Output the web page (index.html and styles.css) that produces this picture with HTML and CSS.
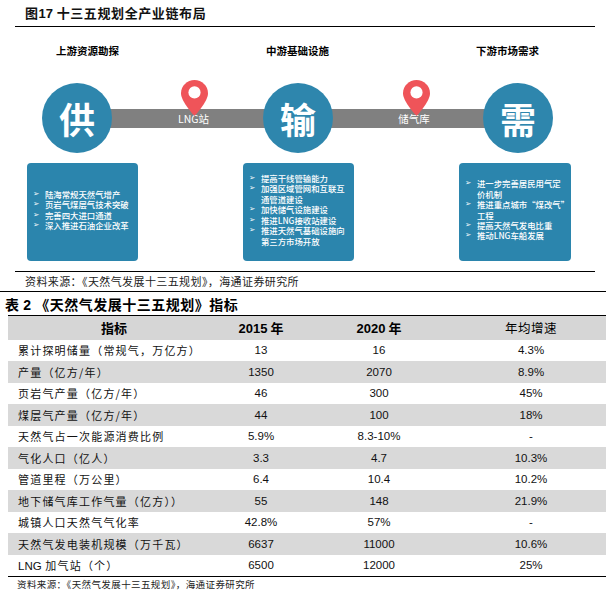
FILE: index.html
```html
<!DOCTYPE html>
<html lang="zh-CN">
<head>
<meta charset="utf-8">
<title>十三五规划全产业链布局</title>
<link rel="stylesheet" href="styles.css">
</head>
<body>
<div class="page">
  <div class="fig-title">图<b class="num">17</b> 十三五规划全产业链布局</div>

  <div class="diagram">
    <div class="stage-titles">
      <div>上游资源勘探</div>
      <div>中游基础设施</div>
      <div>下游市场需求</div>
    </div>

    <div class="chain">
      <div class="node">供</div>
      <div class="link link-a">
        <div class="bar"><span class="link-label">LNG站</span></div>
        <svg class="pin" viewBox="0 0 24 32"><path d="M12 0C5.4 0 0 5.3 0 11.8 0 19.5 12 32 12 32S24 19.5 24 11.8C24 5.3 18.6 0 12 0Z" fill="#ef5459"/><circle cx="12" cy="11" r="5.4" fill="#fff"/></svg>
      </div>
      <div class="node">输</div>
      <div class="link link-b">
        <div class="bar"><span class="link-label">储气库</span></div>
        <svg class="pin" viewBox="0 0 24 32"><path d="M12 0C5.4 0 0 5.3 0 11.8 0 19.5 12 32 12 32S24 19.5 24 11.8C24 5.3 18.6 0 12 0Z" fill="#ef5459"/><circle cx="12" cy="11" r="5.4" fill="#fff"/></svg>
      </div>
      <div class="node">需</div>
    </div>

    <div class="boxes">
      <ul class="box">
        <li><span class="arw">➢</span><span>陆海常规天然气增产</span></li>
        <li><span class="arw">➢</span><span>页岩气煤层气技术突破</span></li>
        <li><span class="arw">➢</span><span>完善四大进口通道</span></li>
        <li><span class="arw">➢</span><span>深入推进石油企业改革</span></li>
      </ul>
      <ul class="box">
        <li><span class="arw">➢</span><span>提高干线管输能力</span></li>
        <li><span class="arw">➢</span><span>加强区域管网和互联互<br>通管道建设</span></li>
        <li><span class="arw">➢</span><span>加快储气设施建设</span></li>
        <li><span class="arw">➢</span><span>推进LNG接收站建设</span></li>
        <li><span class="arw">➢</span><span>推进天然气基础设施向<br>第三方市场开放</span></li>
      </ul>
      <ul class="box">
        <li><span class="arw">➢</span><span>进一步完善居民用气定<br>价机制</span></li>
        <li><span class="arw">➢</span><span>推进重点城市“煤改气”<br>工程</span></li>
        <li><span class="arw">➢</span><span>提高天然气发电比重</span></li>
        <li><span class="arw">➢</span><span>推动LNG车船发展</span></li>
      </ul>
    </div>
  </div>

  <div class="source source-fig">资料来源：《天然气发展十三五规划》，海通证券研究所</div>
  <div class="rule-full"></div>

  <div class="tbl-title">表 <span class="num">2</span> 《天然气发展十三五规划》指标</div>

  <table class="data">
    <colgroup>
      <col class="c1"><col class="c2"><col class="c3"><col class="c4">
    </colgroup>
    <thead>
      <tr>
        <th class="h-bold">指标</th>
        <th class="h-bold"><span class="num">2015</span> 年</th>
        <th class="h-bold"><span class="num">2020</span> 年</th>
        <th class="h-normal">年均增速</th>
      </tr>
    </thead>
    <tbody>
      <tr><td>累计探明储量（常规气，万亿方）</td><td>13</td><td>16</td><td>4.3%</td></tr>
      <tr class="alt"><td>产量（亿方/年）</td><td>1350</td><td>2070</td><td>8.9%</td></tr>
      <tr><td>页岩气产量（亿方/年）</td><td>46</td><td>300</td><td>45%</td></tr>
      <tr class="alt"><td>煤层气产量（亿方/年）</td><td>44</td><td>100</td><td>18%</td></tr>
      <tr><td>天然气占一次能源消费比例</td><td>5.9%</td><td>8.3-10%</td><td>-</td></tr>
      <tr class="alt"><td>气化人口（亿人）</td><td>3.3</td><td>4.7</td><td>10.3%</td></tr>
      <tr><td>管道里程（万公里）</td><td>6.4</td><td>10.4</td><td>10.2%</td></tr>
      <tr class="alt"><td>地下储气库工作气量（亿方））</td><td>55</td><td>148</td><td>21.9%</td></tr>
      <tr><td>城镇人口天然气气化率</td><td>42.8%</td><td>57%</td><td>-</td></tr>
      <tr class="alt"><td>天然气发电装机规模（万千瓦）</td><td>6637</td><td>11000</td><td>10.6%</td></tr>
      <tr><td><span class="num">LNG</span> 加气站（个）</td><td>6500</td><td>12000</td><td>25%</td></tr>
    </tbody>
  </table>

  <div class="source source-tbl">资料来源：《天然气发展十三五规划》，海通证券研究所</div>
</div>
</body>
</html>
```

FILE: styles.css
```css
* { box-sizing: border-box; }

html, body {
  margin: 0;
  padding: 0;
  background: #fff;
}

body {
  font-family: "Noto Sans CJK SC", "Liberation Sans", sans-serif;
  color: #111;
}

.page {
  width: 606px;
  overflow: hidden;
}

.num {
  font-family: "Liberation Sans", "Noto Sans CJK SC", sans-serif;
}

/* figure title */
.fig-title {
  margin: 0 11px 0 15px;
  padding-left: 10px;
  height: 26.5px;
  line-height: 25px;
  font-size: 13px;
  font-weight: 700;
  letter-spacing: 0.6px;
  border-bottom: 1.5px solid #000;
}

.fig-title .num {
  font-weight: 700;
  letter-spacing: 0;
}

/* diagram */
.diagram {
  padding-top: 18px;
}

.stage-titles {
  display: grid;
  grid-template-columns: 111px 111px 111px;
  column-gap: 99px;
  padding-left: 32px;
  height: 12px;
  line-height: 12px;
  font-size: 10.5px;
  font-weight: 700;
  text-align: center;
  color: #000;
}

.chain {
  display: flex;
  align-items: center;
  height: 70px;
  margin-top: 26px;
  padding-left: 42px;
}

.node {
  flex: none;
  width: 70px;
  height: 70px;
  border-radius: 50%;
  background: #2e86ad;
  color: #fff;
  font-size: 36px;
  font-weight: 700;
  display: flex;
  align-items: center;
  justify-content: center;
  position: relative;
  z-index: 2;
  line-height: 1;
}

.link {
  flex: none;
  height: 70px;
  display: flex;
  align-items: center;
  position: relative;
  z-index: 1;
}

.link-a { width: 151px; }
.link-b { width: 150px; }

.bar {
  flex: 1;
  height: 19px;
  margin: 1px -5px 0;
  background: #808080;
  display: flex;
  align-items: center;
  justify-content: center;
  padding-left: 12px;
}

.link-label {
  color: #fff;
  font-size: 10.5px;
  line-height: 12px;
  position: relative;
  top: 1px;
}

.pin {
  position: absolute;
  top: -3px;
  left: calc(50% - 7px);
  width: 27px;
  height: 36px;
}

.link-b .pin {
  left: calc(50% - 5px);
}

.boxes {
  display: grid;
  grid-template-columns: 111px 111px 112px;
  column-gap: 105px;
  padding-left: 27px;
  margin-top: 10px;
}

.box {
  margin: 0;
  height: 98px;
  padding: 0 6px 4px 6px;
  list-style: none;
  background: #2b85ad;
  border-radius: 4px;
  color: #fff;
  display: flex;
  flex-direction: column;
  justify-content: center;
  font-size: 8.4px;
  font-weight: 500;
  line-height: 10.4px;
}

.box li {
  display: flex;
  white-space: nowrap;
}

.arw {
  flex: none;
  width: 12px;
  font-family: "DejaVu Sans", sans-serif;
  font-size: 7.5px;
}

/* sources */
.source {
  font-size: 11px;
  color: #222;
  letter-spacing: 0.4px;
}

.source-fig {
  margin: 10.5px 11px 0 15px;
  padding-left: 10px;
  border-top: 1.5px solid #000;
  height: 19.5px;
  line-height: 18px;
}

.rule-full {
  border-top: 1.5px solid #000;
}

.tbl-title {
  height: 23.5px;
  line-height: 24px;
  padding-left: 5px;
  font-size: 14px;
  font-weight: 700;
  letter-spacing: 0.5px;
  color: #000;
}

.tbl-title .num {
  font-weight: 700;
}

/* table */
.data {
  margin-left: 8px;
  width: 598px;
  border-collapse: collapse;
  table-layout: fixed;
  border-top: 1.5px solid #000;
  border-bottom: 1.5px solid #000;
}

.c1 { width: 212px; }
.c2 { width: 82px; }
.c3 { width: 154px; }
.c4 { width: 150px; }

.data th {
  height: 24px;
  padding: 0;
  background: #d6d6d6;
  text-align: center;
  font-size: 13px;
  color: #000;
}

.data th.h-bold { font-weight: 700; }
.data th.h-normal { font-weight: 400; font-size: 12.5px; letter-spacing: 0.5px; }

.data td {
  height: 21.5px;
  padding: 0;
  text-align: center;
  font-family: "Liberation Sans", "Noto Sans CJK SC", sans-serif;
  font-size: 11.5px;
  color: #111;
}

.data td:first-child {
  text-align: left;
  padding-left: 10px;
  font-family: "Noto Sans CJK SC", sans-serif;
  font-size: 11px;
  letter-spacing: 1.2px;
  white-space: nowrap;
}

.data td:first-child .num {
  font-size: 11.5px;
  letter-spacing: 0;
}

.data tr.alt td {
  background: #d9d9d9;
}

.source-tbl {
  padding-left: 17px;
  font-size: 9.5px;
  line-height: 15px;
}
```
